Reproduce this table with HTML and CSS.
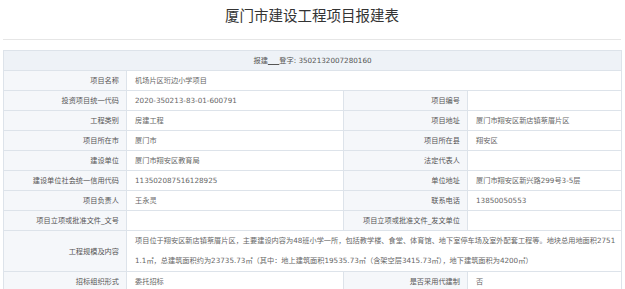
FILE: index.html
```html
<!DOCTYPE html>
<html lang="zh">
<head>
<meta charset="utf-8">
<title>厦门市建设工程项目报建表</title>
<link rel="stylesheet" href="styles.css">
</head>
<body>
<div class="page">
  <h1 class="title">厦门市建设工程项目报建表</h1>
  <div class="rule"></div>
  <table class="form">
    <colgroup>
      <col class="c-label1">
      <col class="c-value1">
      <col class="c-label2">
      <col class="c-value2">
    </colgroup>
    <tr class="head"><td colspan="4">报建<u>&nbsp;&nbsp;&nbsp;&nbsp;&nbsp;</u>登字: 3502132007280160</td></tr>
    <tr><th>项目名称</th><td colspan="3">机场片区珩边小学项目</td></tr>
    <tr><th>投资项目统一代码</th><td>2020-350213-83-01-600791</td><th>项目编号</th><td></td></tr>
    <tr><th>工程类别</th><td>房建工程</td><th>项目地址</th><td>厦门市翔安区新店镇蔡厝片区</td></tr>
    <tr><th>项目所在市</th><td>厦门市</td><th>项目所在县</th><td>翔安区</td></tr>
    <tr><th>建设单位</th><td>厦门市翔安区教育局</td><th>法定代表人</th><td></td></tr>
    <tr><th>建设单位社会统一信用代码</th><td>113502087516128925</td><th>单位地址</th><td>厦门市翔安区新兴路299号3-5层</td></tr>
    <tr><th>项目负责人</th><td>王永灵</td><th>联系电话</th><td>13850050553</td></tr>
    <tr><th>项目立项或批准文件_文号</th><td></td><th>项目立项或批准文件_发文单位</th><td></td></tr>
    <tr class="tall"><th>工程规模及内容</th><td colspan="3" class="desc">项目位于翔安区新店镇蔡厝片区，主要建设内容为48班小学一所，包括教学楼、食堂、体育馆、地下室停车场及室外配套工程等。地块总用地面积27511.1㎡，总建筑面积约为23735.73㎡（其中：地上建筑面积19535.73㎡（含架空层3415.73㎡），地下建筑面积为4200㎡）</td></tr>
    <tr><th>招标组织形式</th><td>委托招标</td><th>是否采用代建制</th><td>否</td></tr>
  </table>
</div>
</body>
</html>
```

FILE: styles.css
```css
html, body {
  margin: 0;
  padding: 0;
  background: #fff;
}
body {
  font-family: "DejaVu Sans", "Noto Sans CJK SC", sans-serif;
  color: #666;
}
.page {
  padding: 0 4px 0 3px;
}
.title {
  margin: 0;
  padding-top: 6px;
  height: 33px;
  font-family: "Noto Sans CJK SC", sans-serif;
  font-size: 14.5px;
  line-height: 18px;
  font-weight: normal;
  color: #333;
  text-align: center;
}
.rule {
  height: 1px;
  background: #e6e6e6;
  margin-bottom: 10px;
}
.form {
  width: 618px;
  border-collapse: collapse;
  table-layout: fixed;
  font-size: 7.2px;
}
.c-label1 { width: 123px; }
.c-value1 { width: 217px; }
.c-label2 { width: 124px; }
.c-value2 { width: 154px; }
.form th,
.form td {
  border: 1px solid #dde3ea;
  height: 19px;
  padding: 0;
  line-height: 19px;
  white-space: nowrap;
  overflow: hidden;
}
.form th {
  background: #f5f7fa;
  font-weight: normal;
  color: #555;
  text-align: right;
  padding-right: 7px;
}
.form td {
  padding-left: 8px;
  text-align: left;
}
.form .head td {
  background: #eef2f7;
  text-align: center;
  padding: 0;
  color: #555;
}
.form .head u {
  text-decoration: underline;
}
.form .desc {
  white-space: normal;
  word-break: break-all;
  line-height: 20px;
  height: 39px;
  padding-right: 1px;
}
```
